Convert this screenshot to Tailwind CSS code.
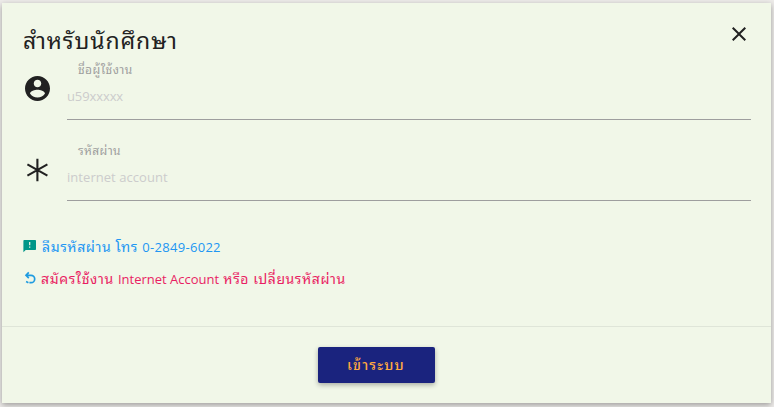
<!DOCTYPE html>
<html lang="th">
<head>
<meta charset="utf-8">
<title>Login</title>
<script src="https://cdn.jsdelivr.net/npm/@tailwindcss/browser@4"></script>
</head>
<body class="h-[407px] overflow-hidden bg-[#eeecea] pt-[3px] pl-[2px] font-['Open_Sans','Noto_Sans_Thai_Looped','Noto_Looped_Thai','Loma','Waree','Garuda','Tlwg_Typo','Noto_Sans_Thai',sans-serif] text-[#212121]">
<main class="flex h-[400px] w-[769px] flex-col bg-[#f1f7e8] shadow-[0_2px_6px_rgba(0,0,0,0.35)]">
  <section class="h-[323px] pr-5 pl-[21px]">
    <header class="flex h-[58px] items-start justify-between">
      <h1 class="pt-[21px] text-[23px] leading-8 tracking-[0.85px] whitespace-nowrap">สำหรับนักศึกษา</h1>
      <svg class="mt-[19px] h-6 w-6" viewBox="0 0 24 24" fill="#212121"><path d="M19 6.41 17.59 5 12 10.59 6.41 5 5 6.41 10.59 12 5 17.59 6.41 19 12 13.41 17.59 19 19 17.59 13.41 12z"/></svg>
    </header>
    <div class="flex h-[81px]">
      <svg class="mt-[12px] h-[31px] w-[30px] shrink-0" viewBox="0 0 24 24" fill="#212121"><path d="M11.6 2C6.08 2 1.6 6.48 1.6 12s4.48 10 10 10 10-4.48 10-10S17.12 2 11.6 2zm0 3c1.66 0 3 1.34 3 3s-1.34 3-3 3-3-1.34-3-3 1.34-3 3-3zm0 14.2c-2.5 0-4.71-1.28-6-3.22.03-1.99 4-3.08 6-3.08 1.99 0 5.97 1.09 6 3.08-1.29 1.94-3.5 3.22-6 3.22z"/></svg>
      <div class="ml-[14px] h-[59px] flex-1 border-b border-[#9e9e9e]">
        <div class="pl-[11px] text-[12px] leading-[18px] tracking-[0.42px] text-[#9e9e9e]">ชื่อผู้ใช้งาน</div>
        <div class="pt-[7px] text-[13px] leading-5 tracking-[-0.1px] text-[#cccccc]">u59xxxxx</div>
      </div>
    </div>
    <div class="flex h-[91px]">
      <svg class="mt-[13px] h-[30px] w-[30px] shrink-0" viewBox="0 0 30 30" fill="none" stroke="#212121" stroke-width="2.1"><path d="M14.4 3.8v22.5M4.4 9.4l20 11.2M24.4 9.4l-20 11.2"/></svg>
      <div class="ml-[14px] h-[59px] flex-1 border-b border-[#9e9e9e]">
        <div class="pl-[11px] text-[12px] leading-[18px] tracking-[0.35px] text-[#9e9e9e]">รหัสผ่าน</div>
        <div class="pt-[7px] text-[13px] leading-5 tracking-[0.05px] text-[#cccccc]">internet account</div>
      </div>
    </div>
    <div class="-mt-[3px] flex h-8 items-center text-[14px] whitespace-nowrap text-[#2196f3]">
      <svg class="mr-[5px] h-[14px] w-[14px]" viewBox="0 0 14 14"><path fill="#009688" d="M1.2 1h11c.5 0 .8.3.8.8v8.4c0 .5-.3.8-.8.8H2.7L.4 13.3V1.8c0-.5.3-.8.8-.8z"/><path fill="#f1f7e8" d="M6.1 3h1.2v3.2H6.1zM6.1 7.4h1.2v1.3H6.1z"/></svg>
      <div class="pt-0.5"><span class="tracking-[0.6px]">ลืมรหัสผ่าน โทร </span><span class="text-[13px] tracking-[0.3px]">0-2849-6022</span></div>
    </div>
    <div class="flex h-8 items-center text-[14px] whitespace-nowrap text-[#e91e63]">
      <svg class="mr-1 h-[14px] w-[14px]" viewBox="0 0 14 14" fill="none" stroke="#1e9be0" stroke-width="1.7"><path d="M5.8 1.4 3 4.3l2.8 2.9M3.2 4.3h4.8a3.7 3.7 0 0 1 0 7.4H6.4M5.4 11.7L3.1 10.6"/></svg>
      <div class="pt-0.5"><span class="tracking-[0.6px]">สมัครใช้งาน </span><span class="text-[13px]">Internet Account</span><span class="tracking-[0.55px]"> หรือ เปลี่ยนรหัสผ่าน</span></div>
    </div>
  </section>
  <footer class="flex flex-1 items-start justify-center border-t border-[#dfe5d8] pt-5 pr-[21px]">
    <button class="h-9 w-[117px] rounded-[2px] bg-[#1a237e] pb-0.5 text-[14px] font-medium tracking-[1.2px] text-[#ffa940] shadow-[0_2px_5px_rgba(0,0,0,0.3)]">เข้าระบบ</button>
  </footer>
</main>
</body>
</html>
